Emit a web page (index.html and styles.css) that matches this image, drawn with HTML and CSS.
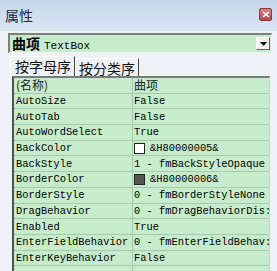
FILE: index.html
```html
<!DOCTYPE html>
<html>
<head>
<meta charset="utf-8">
<link rel="stylesheet" href="styles.css">
</head>
<body>
<div class="window">
  <div class="titlebar">
    <span class="title">属性</span>
    <span class="close"><svg width="8" height="7" viewBox="0 0 8 7"><path d="M1 1 L7 6 M7 1 L1 6" stroke="#fff" stroke-width="1.6"/></svg></span>
  </div>
  <div class="body">
    <div class="combo">
      <span class="combo-text"><b class="cn">曲项</b> <span class="mono">TextBox</span></span>
      <span class="drop"><svg width="7" height="4" viewBox="0 0 7 4"><path d="M0 0 H7 L3.5 4 Z" fill="#000"/></svg></span>
    </div>
    <div class="tabs">
      <span class="tab active">按字母序</span>
      <span class="tab">按分类序</span>
    </div>
    <div class="grid">
      <div class="row"><span class="k cnk">(名称)</span><span class="v cnv">曲项</span></div>
      <div class="row"><span class="k">AutoSize</span><span class="v">False</span></div>
      <div class="row"><span class="k">AutoTab</span><span class="v">False</span></div>
      <div class="row"><span class="k">AutoWordSelect</span><span class="v">True</span></div>
      <div class="row"><span class="k">BackColor</span><span class="v"><i class="sw white"></i>&amp;H80000005&amp;</span></div>
      <div class="row"><span class="k">BackStyle</span><span class="v">1 - fmBackStyleOpaque</span></div>
      <div class="row"><span class="k">BorderColor</span><span class="v"><i class="sw dark"></i>&amp;H80000006&amp;</span></div>
      <div class="row"><span class="k">BorderStyle</span><span class="v">0 - fmBorderStyleNone</span></div>
      <div class="row"><span class="k">DragBehavior</span><span class="v">0 - fmDragBehaviorDis:</span></div>
      <div class="row"><span class="k">Enabled</span><span class="v">True</span></div>
      <div class="row"><span class="k">EnterFieldBehavior</span><span class="v">0 - fmEnterFieldBehav:</span></div>
      <div class="row"><span class="k">EnterKeyBehavior</span><span class="v">False</span></div>
      <div class="row"><span class="k"></span><span class="v"></span></div>
    </div>
  </div>
</div>
</body>
</html>
```
FILE: styles.css
```css
html, body { margin: 0; padding: 0; }
body { width: 277px; height: 271px; overflow: hidden; background: #e9eef5; }
.window { width: 277px; height: 271px; display: flex; flex-direction: column; }
.titlebar {
  height: 31px; flex: none;
  background: linear-gradient(#c7d6ea, #d9e4f2);
  display: flex; align-items: center; justify-content: space-between;
  padding: 0 4px 2px 5px; box-sizing: border-box;
}
.title { font-family: "Noto Sans CJK SC", sans-serif; font-size: 14px; color: #1c2a3a; }
.close {
  width: 11px; height: 11px; background: linear-gradient(#d98080, #b24a4a);
  border: 1px solid #8a3a3a; border-radius: 2px; display: flex; align-items: center; justify-content: center;
  margin-right: 1px;
}
.body { flex: 1; background: #eef1f6; padding: 2px 4px 0 8px; display: flex; flex-direction: column; }
.combo {
  height: 20px; flex: none; box-sizing: border-box; margin-right: 1px;
  background: #c6eccb;
  border-top: 2px solid #808080; border-left: 2px solid #808080;
  border-right: 1px solid #f4f4f4; border-bottom: 1px solid #f4f4f4;
  display: flex; align-items: center; justify-content: space-between;
}
.combo-text { padding-left: 2px; display: flex; align-items: baseline; gap: 4px; }
.cn { font-family: "Noto Sans CJK SC", sans-serif; font-size: 14px; font-weight: bold; color: #000; line-height: 16px; }
.mono { font-family: "Liberation Mono", monospace; font-size: 11px; color: #000; }
.drop {
  width: 14px; height: 13px; box-sizing: border-box; background: #f0f0f0;
  border: 1px solid #fff; border-right-color: #606060; border-bottom-color: #606060;
  display: flex; align-items: center; justify-content: center; margin-right: 1px;
}
.tabs { display: flex; height: 20px; flex: none; margin-top: 3px; padding-left: 2px; align-items: flex-end; }
.tab {
  font-family: "Noto Sans CJK SC", sans-serif; font-size: 14px; color: #111;
  height: 18px; line-height: 18px; padding: 0 3px 0 3px; box-sizing: border-box;
  border-left: 1px solid #fff; border-top: 1px solid #fff; border-right: 1px solid #404040;
}
.tab.active { height: 20px; line-height: 19px; background: #eef1f6; padding-left: 4px; }
.grid {
  flex: 1; margin-left: 4px; margin-right: 3px;
  border-top: 2px solid #7a7a7a; border-left: 2px solid #505050;
  border-right: 1px solid #d0d0d0;
  background: #c6eccb; overflow: hidden;
}
.row { display: grid; grid-template-columns: 119px 1fr; height: 15.7px; box-sizing: border-box; border-bottom: 1px solid #a8c8ad; }
.k, .v {
  font-family: "Liberation Mono", monospace; font-size: 10.4px; color: #000;
  white-space: nowrap; overflow: hidden; padding-left: 2px;
  display: flex; align-items: center;
}
.k { border-right: 1px solid #a8c8ad; }
.v { gap: 5px; padding-left: 1px; }
.cnk, .cnv { font-family: "Noto Sans CJK SC", sans-serif; font-size: 12px; color: #222; line-height: 14px; overflow: visible; }
.sw { display: inline-block; width: 11px; height: 11px; box-sizing: border-box; border: 1px solid #222; flex: none; }
.sw.white { background: #fff; }
.sw.dark { background: #555; }
```
